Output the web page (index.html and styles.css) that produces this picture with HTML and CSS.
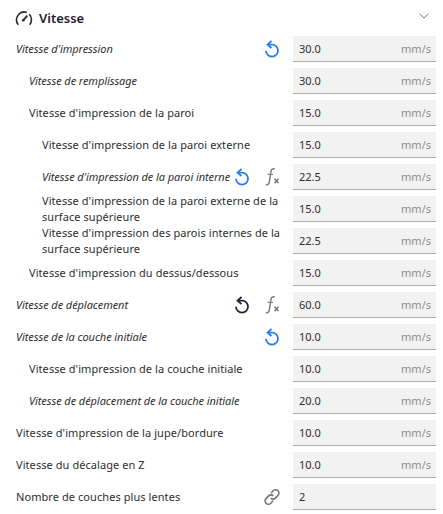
FILE: index.html
```html
<!DOCTYPE html>
<html lang="fr">
<head>
    <meta charset="UTF-8">
    <title>Vitesse</title>
    <link rel="stylesheet" href="styles.css">
</head>
<body>
    <svg class="defs" width="0" height="0">
        <symbol id="reset" viewBox="0 0 16 18">
            <path d="M7.500 1 3.500 4.700l4 3.300" fill="none" stroke="currentColor" stroke-width="1.800"/>
            <path d="M4.500 4.700h3.500a6 6 0 1 1-6 6" fill="none" stroke="currentColor" stroke-width="1.800"/>
        </symbol>
        <symbol id="fx" viewBox="0 0 16 18">
            <path d="M10.800 1.200c-2.200-1-3.400 0-3.800 2.300L5.300 13.800c-.4 2.300-1.500 3.400-3.300 2.700" fill="none" stroke="currentColor" stroke-width="1.400"/>
            <path d="M3.500 6.400h5.500" fill="none" stroke="currentColor" stroke-width="1"/>
            <path d="M10.500 10.700l4 4.300M14.500 10.700l-4 4.300" fill="none" stroke="currentColor" stroke-width="1.600"/>
        </symbol>
        <symbol id="link" viewBox="0 0 16 18">
            <path d="M7 5.200 9.200 2.800a3.300 3.300 0 0 1 4.800 4.600l-2.600 2.700a3.300 3.300 0 0 1-4.700 0" fill="none" stroke="currentColor" stroke-width="1.600"/>
            <path d="M9 12.800 6.800 15.200a3.300 3.300 0 0 1-4.800-4.600l2.600-2.700a3.300 3.300 0 0 1 4.700 0" fill="none" stroke="currentColor" stroke-width="1.600"/>
        </symbol>
    </svg>

    <header class="group-head">
        <svg class="gauge" viewBox="0 0 18 16" width="18" height="16">
            <path d="M3.300 14.700A7.800 7.800 0 0 1 11.800 2.400M14.200 4.300a7.800 7.800 0 0 1 .5 10.400" fill="none" stroke="#2b2b2b" stroke-width="1.600"/>
            <path d="M8.300 10.200 12.300 5.600" stroke="#2b2b2b" stroke-width="1.900"/>
            <circle cx="8.200" cy="10.300" r="1.300" fill="#2b2b2b"/>
        </svg>
        <h2>Vitesse</h2>
        <svg class="chevron" viewBox="0 0 10 6" width="10" height="6">
            <path d="M.5.700 5 5.200 9.500.700" fill="none" stroke="#777" stroke-width="1"/>
        </svg>
    </header>

    <main class="rows">
        <div class="row">
            <label class="changed">Vitesse d'impression</label>
            <svg class="icon blue"><use href="#reset"/></svg>
            <div class="field"><span>30.0</span><em>mm/s</em></div>
        </div>
        <div class="row lvl1">
            <label class="changed">Vitesse de remplissage</label>
            <div class="field"><span>30.0</span><em>mm/s</em></div>
        </div>
        <div class="row lvl1">
            <label>Vitesse d'impression de la paroi</label>
            <div class="field"><span>15.0</span><em>mm/s</em></div>
        </div>
        <div class="row lvl2">
            <label>Vitesse d'impression de la paroi externe</label>
            <div class="field"><span>15.0</span><em>mm/s</em></div>
        </div>
        <div class="row lvl2">
            <label class="changed">Vitesse d'impression de la paroi interne</label>
            <svg class="icon blue"><use href="#reset"/></svg>
            <svg class="icon gray"><use href="#fx"/></svg>
            <div class="field"><span>22.5</span><em>mm/s</em></div>
        </div>
        <div class="row lvl2">
            <label>Vitesse d'impression de la paroi externe de la surface supérieure</label>
            <div class="field"><span>15.0</span><em>mm/s</em></div>
        </div>
        <div class="row lvl2">
            <label>Vitesse d'impression des parois internes de la surface supérieure</label>
            <div class="field"><span>22.5</span><em>mm/s</em></div>
        </div>
        <div class="row lvl1">
            <label>Vitesse d'impression du dessus/dessous</label>
            <div class="field"><span>15.0</span><em>mm/s</em></div>
        </div>
        <div class="row">
            <label class="changed">Vitesse de déplacement</label>
            <svg class="icon dark"><use href="#reset"/></svg>
            <svg class="icon gray"><use href="#fx"/></svg>
            <div class="field"><span>60.0</span><em>mm/s</em></div>
        </div>
        <div class="row">
            <label class="changed">Vitesse de la couche initiale</label>
            <svg class="icon blue"><use href="#reset"/></svg>
            <div class="field"><span>10.0</span><em>mm/s</em></div>
        </div>
        <div class="row lvl1">
            <label>Vitesse d'impression de la couche initiale</label>
            <div class="field"><span>10.0</span><em>mm/s</em></div>
        </div>
        <div class="row lvl1">
            <label class="changed">Vitesse de déplacement de la couche initiale</label>
            <div class="field"><span>20.0</span><em>mm/s</em></div>
        </div>
        <div class="row">
            <label>Vitesse d'impression de la jupe/bordure</label>
            <div class="field"><span>10.0</span><em>mm/s</em></div>
        </div>
        <div class="row">
            <label>Vitesse du décalage en Z</label>
            <div class="field"><span>10.0</span><em>mm/s</em></div>
        </div>
        <div class="row">
            <label>Nombre de couches plus lentes</label>
            <svg class="icon gray"><use href="#link"/></svg>
            <div class="field"><span>2</span></div>
        </div>
    </main>
</body>
</html>
```

FILE: styles.css
```css
* {box-sizing: border-box;}
body, h2 {margin: 0; padding: 0;}
body {
    background: #fff;
    color: #2e2e2e;
    font-family: "Noto Sans", sans-serif;
    font-size: 11px;
    line-height: 16px;
}
.defs {position: absolute;}

/* group header */
.group-head {
    display: flex;
    align-items: center;
    height: 36px;
    padding: 0 14px 0 15px;
}
.gauge {margin-right: 6px;}
.group-head h2 {flex: 1; font-size: 13px; font-weight: 600; color: #1f2430;}
.chevron {margin-bottom: 4px;}

/* setting rows */
.rows {display: flex; flex-direction: column; gap: 6px; padding: 0 7px 0 16px;}
.row {display: flex; align-items: center; height: 26px;}
.lvl1 {padding-left: 13px;}
.lvl2 {padding-left: 26px;}
.row label {flex: 1; min-width: 0; letter-spacing: 0.07px;}
.row label.changed {font-style: italic; letter-spacing: -0.07px;}

.icon {width: 16px; height: 18px; flex: none;}
.icon + .icon {margin-left: 14px;}
.icon + .field {margin-left: 13px;}
label + .field {margin-left: 8px;}
.blue {color: #2b7de9;}
.dark {color: #1f2440;}
.gray {color: #777;}

.field {
    display: flex;
    justify-content: space-between;
    align-items: center;
    flex: none;
    width: 143px;
    height: 26px;
    padding: 0 5px 0 6px;
    background: #f2f2f2;
    border-bottom: 1px solid #aaa;
}
.field em {font-style: normal; color: #8c8c8c;}
```
